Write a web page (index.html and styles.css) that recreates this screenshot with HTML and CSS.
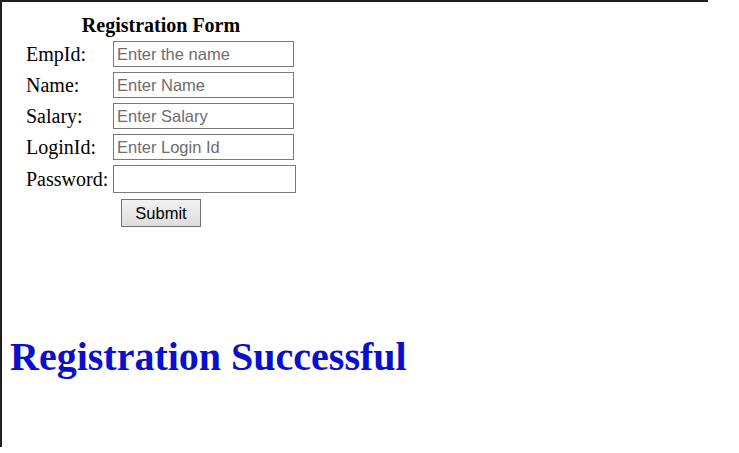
FILE: index.html
```html
<!DOCTYPE html>
<html lang="en">
<head>
<meta charset="utf-8">
<title>Registration Form</title>
<link rel="stylesheet" href="styles.css">
</head>
<body>
<div class="page">
  <form class="form">
    <div class="title">Registration Form</div>
    <div class="grid">
      <label class="label" for="empid">EmpId:</label>
      <input class="field" id="empid" type="text" placeholder="Enter the name">
      <label class="label" for="name">Name:</label>
      <input class="field" id="name" type="text" placeholder="Enter Name">
      <label class="label" for="salary">Salary:</label>
      <input class="field" id="salary" type="text" placeholder="Enter Salary">
      <label class="label" for="login">LoginId:</label>
      <input class="field" id="login" type="text" placeholder="Enter Login Id">
      <label class="label" for="pwd">Password:</label>
      <input class="field field-pwd" id="pwd" type="password">
      <span></span>
      <div><button class="submit" type="button">Submit</button></div>
    </div>
  </form>
  <h1 class="success">Registration Successful</h1>
</div>
</body>
</html>
```
FILE: styles.css
```css
html, body {
  margin: 0;
  padding: 0;
  background: #ffffff;
}

.page {
  box-sizing: border-box;
  width: 708px;
  height: 447px;
  border-top: 2px solid #231f20;
  border-left: 2px solid #231f20;
  font-family: "Liberation Serif", "Times New Roman", serif;
  color: #000;
}

.form {
  display: inline-block;
  margin: 0;
  padding: 12px 0 0 24px;
}

.title {
  font-weight: bold;
  font-size: 20px;
  line-height: 23px;
  text-align: center;
  margin-bottom: 4px;
}

.grid {
  display: grid;
  grid-template-columns: 87px auto;
  row-gap: 5px;
  align-items: center;
}

.label {
  font-size: 20px;
  line-height: 23px;
}

.field {
  box-sizing: border-box;
  width: 181px;
  height: 26px;
  margin: 0;
  padding: 0 3px;
  border: 1px solid #7a7a7a;
  font-family: "Liberation Sans", Arial, sans-serif;
  font-size: 16.5px;
  color: #000;
  background: #fff;
}

.field::placeholder {
  color: #6d6d6d;
}

.field-pwd {
  width: 183px;
  height: 28px;
}

.submit {
  box-sizing: border-box;
  width: 80px;
  height: 28px;
  margin: 1px 0 0 8px;
  padding: 0;
  border: 1px solid #707070;
  background: linear-gradient(#f2f2f2, #dddddd);
  font-family: "Liberation Sans", Arial, sans-serif;
  font-size: 16.5px;
  color: #000;
}

.success {
  margin: 107px 0 0 8px;
  font-size: 40px;
  line-height: 46px;
  font-weight: bold;
  color: #0a0fcc;
}
```
